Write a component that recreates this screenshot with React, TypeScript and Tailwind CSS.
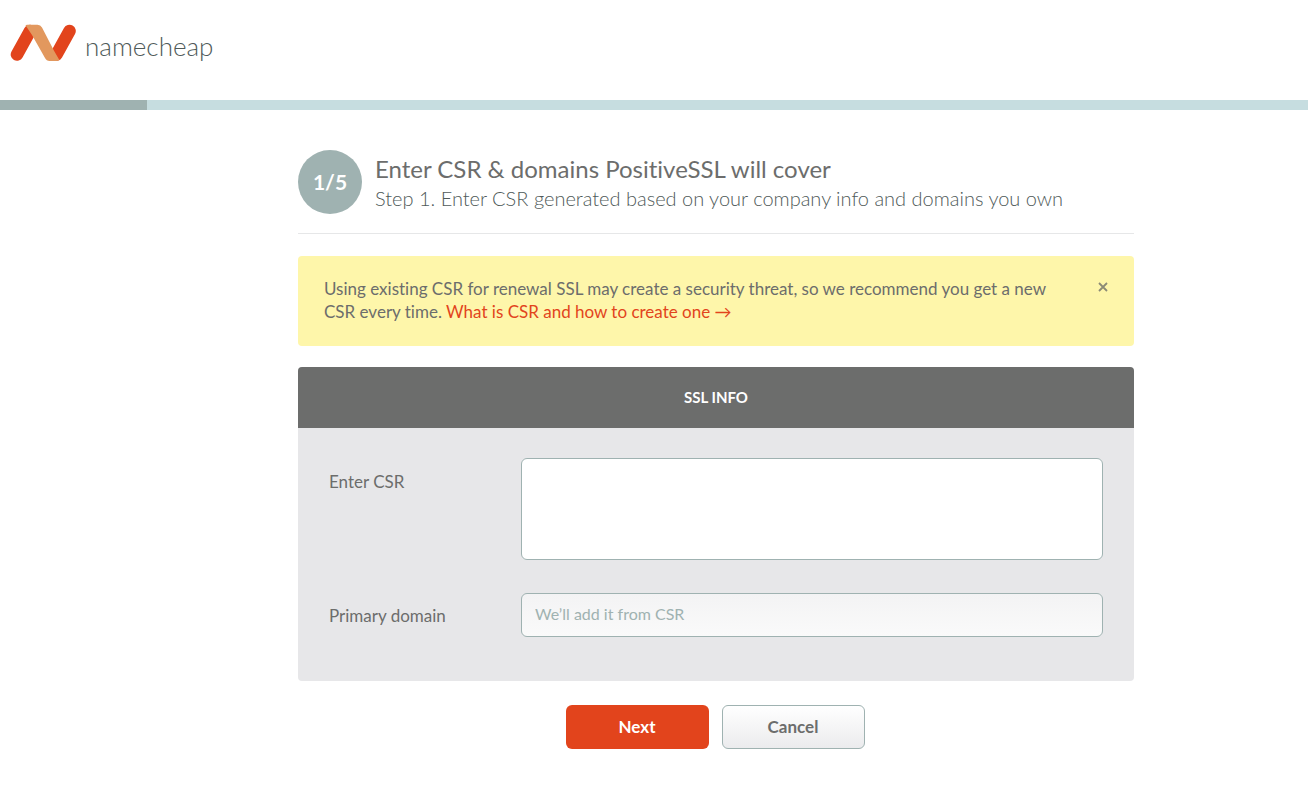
import { useState } from "react";

function LogoMark() {
  return (
    <svg viewBox="0 0 66 38" className="h-[38px] w-[66px]" aria-hidden="true">
      <path d="M7 30.500 L20 7" stroke="#e2441c" strokeWidth="12.600" strokeLinecap="round" />
      <path d="M46.500 30.500 L59.500 7" stroke="#e2441c" strokeWidth="12.600" strokeLinecap="round" />
      <path
        d="M17 0.700 H27.500 Q30.500 0.700 32 3.500 L44 26.800 L49.500 36.200 Q48 37 46 37 H39.500 Q36.500 37 35 34 L22 11 L15.500 1.200 Z"
        fill="#e2985e"
      />
    </svg>
  );
}

export default function App() {
  const [noticeOpen, setNoticeOpen] = useState(true);

  return (
    <div className="min-h-screen bg-white font-['Lato','Open_Sans',sans-serif] text-[17px] text-[#6c6d6c] [font-variant-ligatures:none]">
      <header className="flex h-[100px] items-start px-[10px] pt-6">
        <a href="#home" aria-label="namecheap" className="flex items-start gap-[9px]">
          <LogoMark />
          <span className="pt-1 text-[26px] leading-9 font-light text-[#4f5a59]">namecheap</span>
        </a>
      </header>
      <div
        role="progressbar"
        aria-label="Activation progress"
        aria-valuenow={11}
        className="flex h-[10px] bg-[#c6dde0]"
      >
        <div className="w-[147px] bg-[#9fb2b1]" />
      </div>

      <main className="pt-10 pr-[174px] pl-[298px]">
        <div className="flex items-start gap-[13px] border-b border-[#e6e7e8] pb-[19px]">
          <div className="flex size-16 shrink-0 items-center justify-center rounded-full bg-[#9fb2b1] text-[21px] font-bold text-white">
            1/5
          </div>
          <div className="pt-1">
            <h1 className="text-2xl leading-[30px]">Enter CSR &amp; domains PositiveSSL will cover</h1>
            <p className="text-[20px] leading-7 font-light text-[#4f5a59]">
              Step 1. Enter CSR generated based on your company info and domains you own
            </p>
          </div>
        </div>

        {noticeOpen && (
          <div className="mt-[22px] flex items-start justify-between rounded bg-[#fef6aa] pt-[21px] pr-[25px] pb-[23px] pl-[26px]">
            <p className="max-w-[732px] leading-[23px]">
              Using existing CSR for renewal SSL may create a security threat, so we recommend you get a new CSR every
              time.{" "}
              <a href="#csr" className="text-[#e2441c]">
                What is CSR and how to create one →
              </a>
            </p>
            <button type="button" aria-label="Dismiss" onClick={() => setNoticeOpen(false)} className="pt-1">
              <svg viewBox="0 0 12 12" className="size-3" stroke="#8b8a76" strokeWidth="1.8">
                <path d="M2 2 L10 10 M10 2 L2 10" />
              </svg>
            </button>
          </div>
        )}

        <section className="mt-[21px] overflow-hidden rounded bg-[#e7e7e9]">
          <h2 className="bg-[#6c6d6c] py-5 text-center text-[15px] leading-[21px] font-bold text-white">SSL INFO</h2>
          <div className="grid grid-cols-[192px_1fr] gap-y-[33px] px-[31px] pt-[30px] pb-11">
            <label htmlFor="csr" className="pt-3 leading-6">
              Enter CSR
            </label>
            <textarea
              id="csr"
              className="h-[102px] w-full resize-none rounded-md border border-[#9fb2b1] bg-white px-3 py-2 outline-none"
            />
            <label htmlFor="domain" className="pt-[11px] leading-6">
              Primary domain
            </label>
            <input
              id="domain"
              type="text"
              placeholder="We’ll add it from CSR"
              className="h-11 w-full rounded-md border border-[#9fb2b1] bg-linear-to-b from-[#f3f3f4] to-[#fafafa] px-[13px] pb-1 text-base outline-none placeholder:text-[#9fb2b1]"
            />
          </div>
        </section>

        <div className="mt-6 flex justify-center gap-[13px] pr-[2px] pb-9">
          <button type="button" className="h-11 w-[143px] rounded-md bg-[#e2441c] font-bold text-white">
            Next
          </button>
          <button
            type="button"
            className="h-11 w-[143px] rounded-md border border-[#9fb2b1] bg-linear-to-b from-white to-[#ebebed] font-bold"
          >
            Cancel
          </button>
        </div>
      </main>
    </div>
  );
}
